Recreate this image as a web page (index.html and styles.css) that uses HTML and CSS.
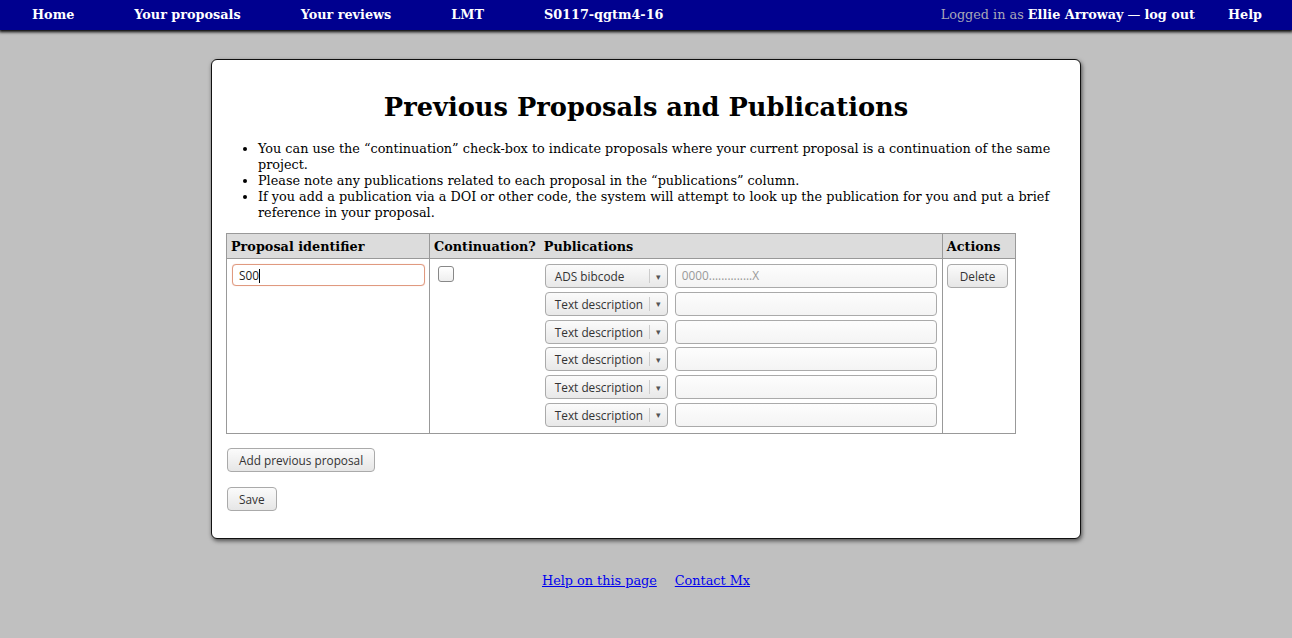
FILE: index.html
```html
<!DOCTYPE html>
<html>
<head>
<meta charset="utf-8">
<title>Previous Proposals and Publications</title>
<link rel="stylesheet" href="styles.css">
</head>
<body>
<nav class="nav">
  <div class="nav-left">
    <a class="nav-link" href="#">Home</a>
    <a class="nav-link" href="#">Your proposals</a>
    <a class="nav-link" href="#">Your reviews</a>
    <a class="nav-link" href="#">LMT</a>
    <a class="nav-link" href="#">S0117-qgtm4-16</a>
  </div>
  <div class="nav-right">
    <span class="user">Logged in as <b class="white">Ellie Arroway</b> <span class="white">—</span> <a class="logout" href="#">log out</a></span>
    <a class="nav-link" href="#">Help</a>
  </div>
</nav>

<main class="card">
  <h1 class="title">Previous Proposals and Publications</h1>
  <ul class="notes">
    <li>You can use the “continuation” check-box to indicate proposals where your current proposal is a continuation of the same project.</li>
    <li>Please note any publications related to each proposal in the “publications” column.</li>
    <li>If you add a publication via a DOI or other code, the system will attempt to look up the publication for you and put a brief reference in your proposal.</li>
  </ul>

  <table class="grid">
    <thead>
      <tr>
        <th class="c1">Proposal identifier</th>
        <th class="c2">Continuation?</th>
        <th class="c3">Publications</th>
        <th class="c4">Actions</th>
      </tr>
    </thead>
    <tbody>
      <tr>
        <td class="c1"><div class="field focus">S00<span class="caret"></span></div></td>
        <td class="c2"><span class="check"></span></td>
        <td class="c3">
          <div class="pubs">
            <div class="pub"><span class="select"><span class="sel-text">ADS bibcode</span><span class="sel-arrow">▾</span></span><span class="field ph">0000..............X</span></div>
            <div class="pub"><span class="select"><span class="sel-text">Text description</span><span class="sel-arrow">▾</span></span><span class="field"></span></div>
            <div class="pub"><span class="select"><span class="sel-text">Text description</span><span class="sel-arrow">▾</span></span><span class="field"></span></div>
            <div class="pub"><span class="select"><span class="sel-text">Text description</span><span class="sel-arrow">▾</span></span><span class="field"></span></div>
            <div class="pub"><span class="select"><span class="sel-text">Text description</span><span class="sel-arrow">▾</span></span><span class="field"></span></div>
            <div class="pub"><span class="select"><span class="sel-text">Text description</span><span class="sel-arrow">▾</span></span><span class="field"></span></div>
          </div>
        </td>
        <td class="c4"><button class="btn">Delete</button></td>
      </tr>
    </tbody>
  </table>

  <div class="actions">
    <button class="btn">Add previous proposal</button>
    <button class="btn">Save</button>
  </div>
</main>

<footer class="footer">
  <a href="#">Help on this page</a>
  <a href="#">Contact Mx</a>
</footer>
</body>
</html>
```

FILE: styles.css
```css
html, body {
  margin: 0;
  padding: 0;
}
body {
  background: #c0c0c0;
  font-family: "DejaVu Serif", serif;
  font-size: 12.8px;
  color: #000;
  min-height: 638px;
}
.nav {
  display: flex;
  justify-content: space-between;
  align-items: center;
  height: 30px;
  box-sizing: border-box;
  padding-bottom: 2px;
  background: #00008f;
  box-shadow: 0 1px 3px 1px #000;
  padding-left: 2px;
  font-size: 12.8px;
}
.nav-left, .nav-right {
  display: flex;
  align-items: center;
}
.nav-link {
  color: #fff;
  font-weight: bold;
  text-decoration: none;
  padding: 0 30px;
}
.user {
  color: #a8a8b8;
  margin-right: 3px;
}
.white { color: #fff; }
.logout {
  color: #fff;
  font-weight: bold;
  text-decoration: none;
}
.card {
  width: 840px;
  margin: 29px auto 0;
  background: #fff;
  border: 1px solid #111;
  border-radius: 6px;
  box-shadow: 1px 2px 4px rgba(0,0,0,0.6);
  padding: 14px 14px 27px;
}
.title {
  text-align: center;
  font-size: 25.7px;
  margin: 17px 0 18px;
  line-height: 32px;
}
.notes {
  margin: 0 0 12px;
  padding-left: 32px;
  line-height: 16px;
}
.grid {
  border-collapse: collapse;
  border: 1px solid #999;
}
.grid th {
  background: #dcdcdc;
  text-align: left;
  font-weight: bold;
  height: 24px;
  padding: 0 4px;
  border-bottom: 1px solid #999;
}
.grid td {
  vertical-align: top;
  padding: 5px 4px 6px;
}
.c1 { width: 194px; border-right: 1px solid #999; }
.c2 { width: 97px; }
.c3 { width: 393px; border-right: 1px solid #999; }
.c4 { width: 64px; }
.grid td.c2 { padding-left: 8px; }
.grid td.c3 { padding-right: 5px; }
.field {
  display: block;
  box-sizing: border-box;
  height: 23px;
  border: 1px solid #aaa;
  border-radius: 4px;
  background: linear-gradient(#fdfdfd, #f4f4f4);
  font-family: "Open Sans", "DejaVu Sans", sans-serif;
  font-size: 11.8px;
  line-height: 21px;
  padding: 0 6px;
  color: #222;
}
.grid td.c1 .field { margin-left: 1px; height: 22px; line-height: 20px; }
.field.focus {
  border-color: #e09a80;
  background: #fff;
  box-shadow: 0 0 1px #f0c0b0;
}
.caret {
  display: inline-block;
  width: 1px;
  height: 14px;
  background: #000;
  vertical-align: -3px;
}
.ph { color: #999; }
.check {
  display: block;
  width: 14px;
  height: 14px;
  border: 1px solid #888;
  border-radius: 3px;
  background: linear-gradient(#fff, #eee);
  margin-top: 2px;
}
.pubs {
  display: flex;
  flex-direction: column;
  gap: 3.8px;
  padding-left: 1px;
}
.pub {
  display: flex;
  gap: 7px;
}
.pub .field {
  flex: 1;
  height: 24px;
}
.select {
  display: flex;
  align-items: center;
  box-sizing: border-box;
  width: 123px;
  height: 24px;
  border: 1px solid #aaa;
  border-radius: 4px;
  background: linear-gradient(#fbfbfb, #e8e8e8);
  font-family: "Open Sans", "DejaVu Sans", sans-serif;
  font-size: 11.8px;
  color: #333;
}
.sel-text {
  flex: 1;
  padding-left: 9px;
  border-right: 1px solid #ccc;
  line-height: 14px;
}
.sel-arrow {
  width: 17px;
  text-align: center;
  font-size: 9px;
  color: #555;
}
.btn {
  display: block;
  box-sizing: border-box;
  height: 24px;
  border: 1px solid #aaa;
  border-radius: 4px;
  background: linear-gradient(#fbfbfb, #e6e6e6);
  font-family: "Open Sans", "DejaVu Sans", sans-serif;
  font-size: 11.8px;
  color: #333;
  padding: 0 11px;
  margin: 0;
}
.c4 .btn { padding: 0 12px; }
.actions {
  display: flex;
  flex-direction: column;
  align-items: flex-start;
  gap: 15px;
  margin-top: 14px;
  padding-left: 1px;
}
.footer {
  display: flex;
  justify-content: center;
  gap: 18px;
  margin-top: 34px;
  font-size: 12.8px;
  padding-right: 0;
}
.footer a { color: #00e; }
```
